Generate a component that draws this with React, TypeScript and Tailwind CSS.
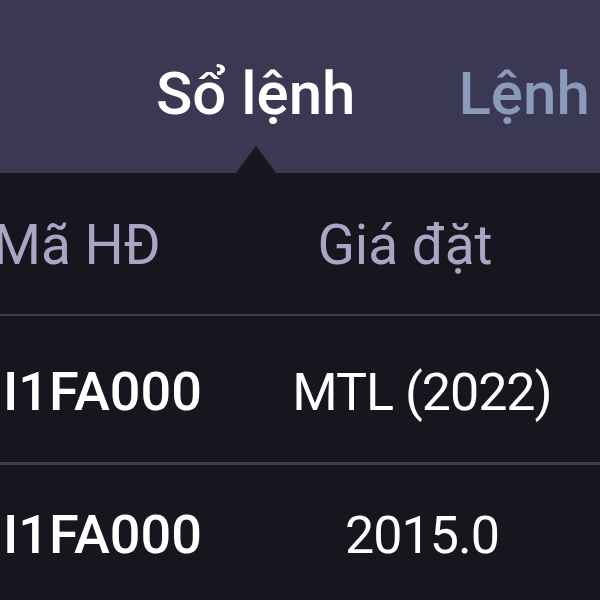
import React from "react";

export default function App() {
  return (
    <div
      className="w-[600px] h-[600px] overflow-hidden bg-[#17161f] flex flex-col"
      style={{ fontFamily: "Roboto, 'Noto Sans', sans-serif" }}
    >
      {/* Tab header */}
      <div className="h-[173px] shrink-0 bg-[#3b3853] flex items-stretch pl-[156px] gap-[103px]">
        <div className="relative flex flex-col pt-[64px]">
          <span className="text-[60px] leading-[60px] font-medium text-white whitespace-nowrap">
            Sổ lệnh
          </span>
          <div className="absolute bottom-0 left-1/2 -translate-x-1/2 w-0 h-0 border-l-[20px] border-r-[20px] border-b-[27px] border-l-transparent border-r-transparent border-b-[#17161f]" />
        </div>
        <div className="flex flex-col pt-[64px]">
          <span className="text-[60px] leading-[60px] font-medium text-[#8b99ba] whitespace-nowrap">
            Lệnh
          </span>
        </div>
      </div>

      {/* Column headers */}
      <div className="h-[143px] shrink-0 flex pt-[45px] border-b-2 border-[#3a3b4e]">
        <div className="w-[260px] shrink-0 ml-[-7px] text-[55px] leading-[55px] text-[#a8a6c4] whitespace-nowrap">
          Mã HĐ
        </div>
        <div className="w-[324px] shrink-0 pr-[20px] text-center text-[55px] leading-[55px] text-[#a8a6c4] whitespace-nowrap">
          Giá đặt
        </div>
      </div>

      {/* Row 1 */}
      <div className="h-[149px] shrink-0 flex items-baseline pt-[49px] border-b-[3px] border-[#3d4154]">
        <div className="w-[253px] shrink-0 pl-[3px] text-[54px] leading-[54px] font-medium text-white whitespace-nowrap">
          I1FA000
        </div>
        <div className="w-[338px] shrink-0 text-center text-[52px] leading-[52px] tracking-[-1px] text-white whitespace-nowrap">
          MTL (2022)
        </div>
      </div>

      {/* Row 2 */}
      <div className="flex-1 flex items-baseline pt-[43px]">
        <div className="w-[253px] shrink-0 pl-[3px] text-[54px] leading-[54px] font-medium text-white whitespace-nowrap">
          I1FA000
        </div>
        <div className="w-[338px] shrink-0 text-center text-[52px] leading-[52px] tracking-[-1px] text-white whitespace-nowrap">
          2015.0
        </div>
      </div>
    </div>
  );
}
